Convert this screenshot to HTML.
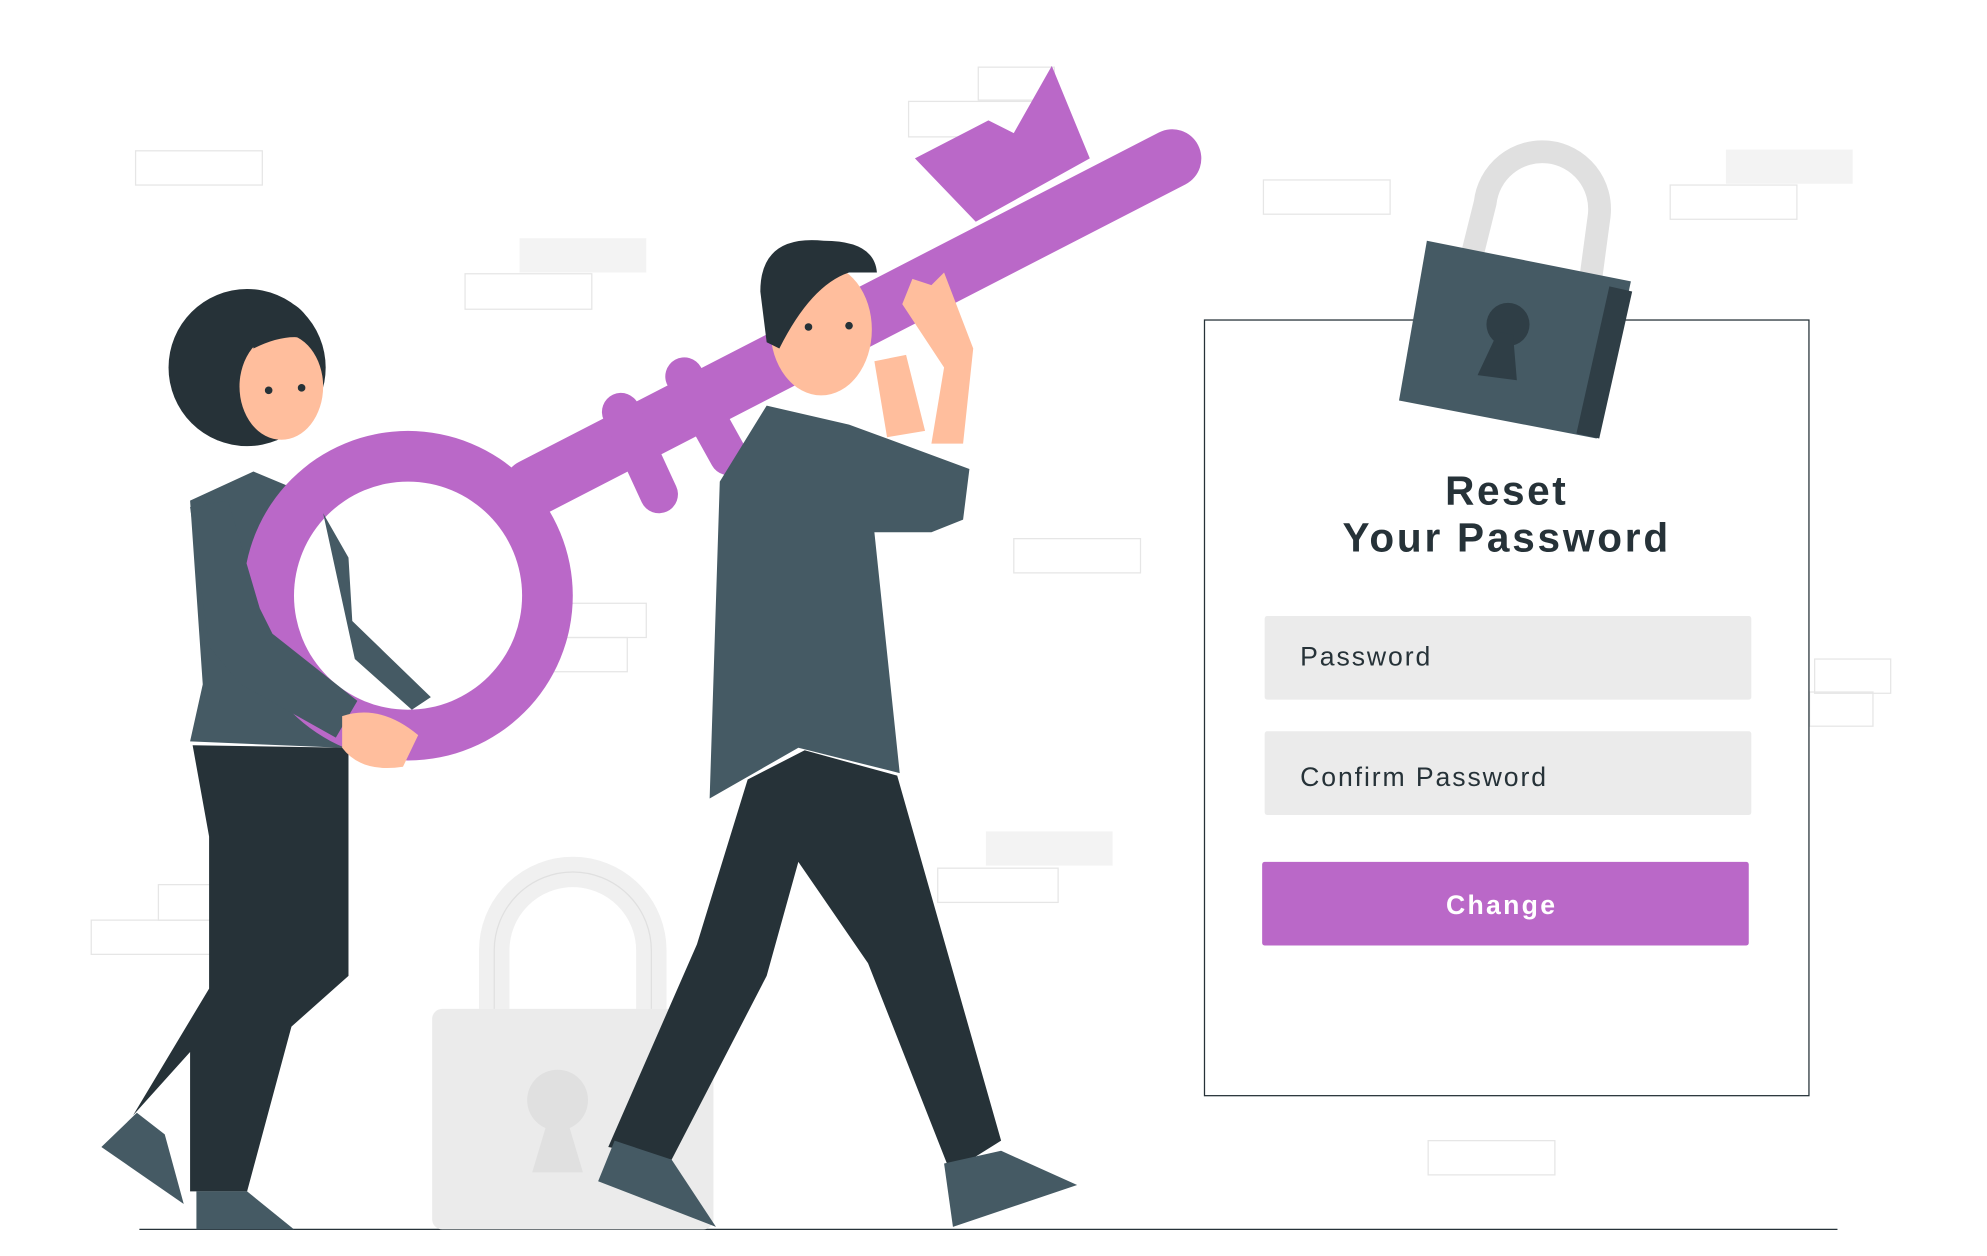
<!DOCTYPE html>
<html><head><meta charset="utf-8"><style>
html,body{margin:0;padding:0;background:#fff;width:1987px;height:1256px;overflow:hidden}
svg{display:block}
text{font-family:"Liberation Sans",sans-serif}
</style></head><body>
<svg width="1987" height="1256" viewBox="0 0 1568 991" preserveAspectRatio="none" xmlns="http://www.w3.org/2000/svg">
<g fill="none" stroke="#e6e6e6" stroke-width="1">
<rect x="107" y="119" width="100" height="27"/>
<rect x="410" y="188" width="100" height="27" fill="#f3f3f3" stroke="none"/>
<rect x="367" y="216" width="100" height="28"/>
<rect x="772" y="53" width="60" height="26"/>
<rect x="717" y="80" width="100" height="28"/>
<rect x="997" y="142" width="100" height="27"/>
<rect x="1362" y="118" width="100" height="27" fill="#f3f3f3" stroke="none"/>
<rect x="1318" y="146" width="100" height="27"/>
<rect x="800" y="425" width="100" height="27"/>
<rect x="445" y="476" width="65" height="27"/>
<rect x="395" y="503" width="100" height="27"/>
<rect x="1432" y="520" width="60" height="27"/>
<rect x="1428" y="546" width="50" height="27"/>
<rect x="778" y="656" width="100" height="27" fill="#f3f3f3" stroke="none"/>
<rect x="740" y="685" width="95" height="27"/>
<rect x="125" y="698" width="50" height="28"/>
<rect x="72" y="726" width="100" height="27"/>
<rect x="1127" y="900" width="100" height="27"/>
</g>
<line x1="110" y1="970" x2="1450" y2="970" stroke="#263238" stroke-width="1"/>

<!-- ghost lock -->
<path d="M390 800 V750 A62 62 0 0 1 514 750 V800" fill="none" stroke="#f0f0f0" stroke-width="24"/>
<path d="M390 800 V750 A62 62 0 0 1 514 750 V800" fill="none" stroke="#e0e0e0" stroke-width="1"/>
<rect x="341" y="796" width="222" height="174" rx="8" fill="#ebebeb"/>
<circle cx="440" cy="868" r="24" fill="#e0e0e0"/>
<polygon points="432,885 448,885 460,925 420,925" fill="#e0e0e0"/>

<!-- form -->
<rect x="950.5" y="252.5" width="477" height="612" fill="#fff" stroke="#263238" stroke-width="1"/>
<!-- lock -->
<path d="M1162 200 L1172 160 A45 45 0 0 1 1262 170 L1255 222" fill="none" stroke="#e0e0e0" stroke-width="18"/>
<polygon points="1126,190 1287,222 1260,346 1104,316" fill="#455a64"/>
<polygon points="1270,226 1288,230 1262,346 1244,342" fill="#2f3e46"/>
<circle cx="1190" cy="256" r="17" fill="#2f3e46"/>
<polygon points="1182,262 1194,264 1197,300 1166,296" fill="#2f3e46"/>
<text x="1189" y="398" text-anchor="middle" font-size="32" font-weight="bold" fill="#263238" letter-spacing="2">Reset</text>
<text x="1189" y="435" text-anchor="middle" font-size="32" font-weight="bold" fill="#263238" letter-spacing="2.2">Your Password</text>
<rect x="998" y="486" width="384" height="66" rx="2" fill="#ebebeb"/>
<text x="1026" y="525" font-size="21" fill="#263238" letter-spacing="1.5">Password</text>
<rect x="998" y="577" width="384" height="66" rx="2" fill="#ebebeb"/>
<text x="1026" y="620" font-size="21" fill="#263238" letter-spacing="1.5">Confirm Password</text>
<rect x="996" y="680" width="384" height="66" rx="2" fill="#ba68c8"/>
<text x="1185" y="721" text-anchor="middle" font-size="21" font-weight="bold" fill="#fff" letter-spacing="1.8">Change</text>

<!-- woman -->
<circle cx="195" cy="290" r="62" fill="#263238"/>
<ellipse cx="222" cy="305" rx="33" ry="42" fill="#ffbe9d"/>
<path d="M195 240 Q240 225 250 270 Q230 260 200 275Z" fill="#263238"/>
<circle cx="212" cy="308" r="3" fill="#263238"/><circle cx="238" cy="306" r="3" fill="#263238"/>
<polygon points="150,395 200,372 255,395 280,485 340,550 270,590 150,585 160,540" fill="#455a64"/>
<polygon points="152,588 275,590 275,770 230,810 195,940 150,940 150,830 105,880 165,780 165,660" fill="#263238"/>
<polygon points="108,878 130,895 145,950 80,905" fill="#455a64"/>
<polygon points="155,940 195,940 232,970 155,970" fill="#455a64"/>

<!-- key -->
<path d="M420 385 L925 125" stroke="#ba68c8" stroke-width="46" stroke-linecap="round"/>
<polygon points="722,125 780,95 800,105 830,52 860,125 770,175" fill="#ba68c8"/>
<circle cx="322" cy="470" r="130" fill="#ba68c8"/>
<circle cx="322" cy="470" r="90" fill="#fff"/>
<path d="M490 325 L520 390" stroke="#ba68c8" stroke-width="30" stroke-linecap="round"/>
<path d="M540 297 L575 360" stroke="#ba68c8" stroke-width="30" stroke-linecap="round"/>
<!-- woman arms over ring -->
<polygon points="150,400 180,395 205,480 215,500 282,553 265,582 190,540 165,510" fill="#455a64"/>
<polygon points="255,405 275,440 278,490 340,550 325,560 280,520" fill="#455a64"/>
<path d="M270 565 Q300 555 330 580 L318 605 Q285 610 270 590Z" fill="#ffbe9d"/>

<!-- man -->
<ellipse cx="648" cy="260" rx="40" ry="52" fill="#ffbe9d"/>
<path d="M600 230 Q600 185 650 190 Q690 190 692 215 L670 215 Q640 225 615 275 L605 270Z" fill="#263238"/>
<circle cx="638" cy="258" r="3" fill="#263238"/><circle cx="670" cy="257" r="3" fill="#263238"/>
<polygon points="690,285 715,280 730,340 700,345" fill="#ffbe9d"/>
<path d="M712 240 L720 220 L735 225 L745 215 L768 275 L760 350 L735 350 L745 290Z" fill="#ffbe9d"/>
<polygon points="605,320 670,335 765,370 760,410 735,420 690,420 710,610 630,590 560,630 568,380" fill="#455a64"/>
<polygon points="590,615 635,592 708,612 790,900 750,925 685,760 630,680 605,770 530,915 480,905 550,745" fill="#263238"/>
<polygon points="485,900 530,915 565,968 472,932" fill="#455a64"/>
<polygon points="745,918 790,908 850,935 752,968" fill="#455a64"/>
</svg>
</body></html>
